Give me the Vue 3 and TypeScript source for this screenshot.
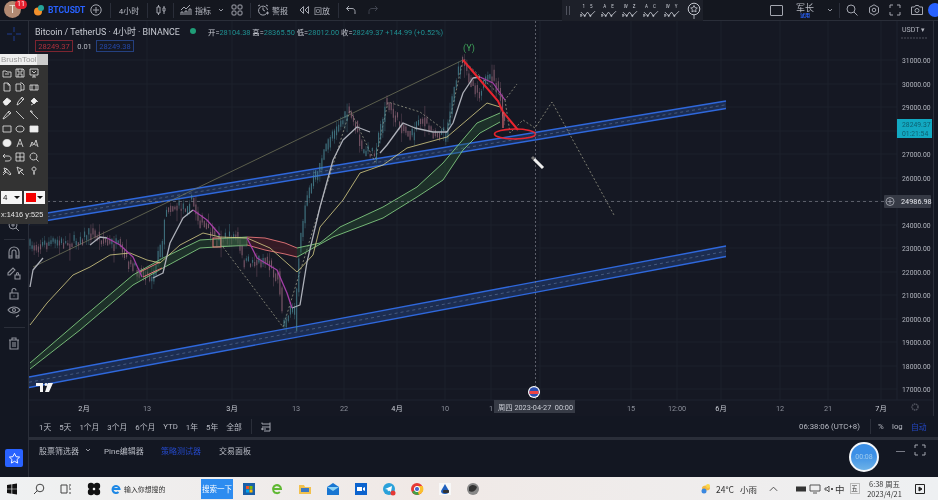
<script setup lang="ts">
type P = [number, number]
const s = (a: P[]) => a.map((p) => p.join(',')).join(' ')

const env: P[] = [[30,247],[53,243],[73,243],[92,233],[107,242],[120,247],[132,267],[153,277],[163,243],[167,207],[187,207],[193,200],[200,220],[217,240],[237,237],[245,263],[267,260],[280,280],[284,322],[297,307],[300,247],[307,200],[320,167],[333,133],[350,113],[357,127],[363,153],[377,150],[387,103],[400,123],[413,137],[420,117],[433,132],[447,133],[452,107],[455,85],[463,62],[473,83],[480,92],[493,75],[502,100],[505,125]]
const yAt = (x: number) => {
  for (let i = 1; i < env.length; i++) {
    if (x <= env[i][0]) {
      const [a, b] = [env[i - 1], env[i]]
      return a[1] + ((b[1] - a[1]) * (x - a[0])) / (b[0] - a[0])
    }
  }
  return env[env.length - 1][1]
}
let seed = 7
const rnd = () => {
  seed = (seed * 16807) % 2147483647
  return seed / 2147483647
}
const candles: { x: number; y1: number; y2: number; t: number; b: number; c: string }[] = []
for (let x = 30; x < 505; x += 2.1) {
  const y0 = yAt(x)
  const d = yAt(x + 2.1) - y0
  const j = (rnd() - 0.5) * 9
  const up = d + j * 0.35 < 0
  const h = 1.5 + rnd() * 5 + Math.abs(d)
  const top = y0 + j - h / 2
  const spike = rnd() > 0.8 ? 12 : 5
  candles.push({ x, y1: top - rnd() * spike, y2: top + h + rnd() * spike, t: top, b: top + h, c: up ? '#4b8a98' : '#96697c' })
}

const band = (x0: number, y0: number, x1: number, y1: number, th: number) => ({
  top: s([[x0, y0], [x1, y1]]),
  bot: s([[x0, y0 + th], [x1, y1 + th]]),
  mid: s([[x0, y0 + th / 2], [x1, y1 + th / 2]]),
  fill: s([[x0, y0], [x1, y1], [x1, y1 + th], [x0, y0 + th]]),
})
const channels = [band(29, 216, 726, 101, 7.5), band(29, 377, 726, 246, 10.5)]

const gTop: P[] = [[30,363],[80,320],[133,275],[163,258],[200,240],[247,237]]
const gBot: P[] = [[30,369],[80,330],[133,285],[163,268],[200,248],[247,245]]
const rTop: P[] = [[247,237],[265,238],[285,243],[297,248]]
const rBot: P[] = [[247,245],[265,250],[285,254],[297,257]]
const hTop: P[] = [[297,248],[320,243],[340,227],[383,207],[417,187],[443,163],[460,143],[477,123],[500,113]]
const hBot: P[] = [[297,257],[333,237],[383,218],[417,197],[443,180],[463,150],[480,133],[500,122]]
const poly = (a: P[], b: P[]) => s([...a, ...[...b].reverse()])

const ribbons = [
  { f: poly(gTop, gBot), t: s(gTop), b: s(gBot), fc: '#2a5a35', lc: '#7fc77f' },
  { f: poly(hTop, hBot), t: s(hTop), b: s(hBot), fc: '#2a5a35', lc: '#7fc77f' },
  { f: poly(rTop, rBot), t: s(rTop), b: s(rBot), fc: '#6a2029', lc: '#e8777a' },
]
const redBit = s([[140, 272], [160, 262]])
const redBit2 = s([[143, 277], [162, 268]])

const yellow = s([[30,325],[47,303],[73,275],[90,267],[110,255],[130,253],[147,260],[160,263],[180,245],[203,233],[220,237],[247,238],[270,248],[297,272],[313,255],[320,227],[343,200],[360,173],[383,165],[407,148],[447,137],[467,120],[487,103],[500,107]])
const white = [
  s([[30,287],[33,270],[43,258]]),
  s([[90,245],[100,237],[107,238]]),
  s([[153,278],[163,273],[170,243],[183,218],[193,210]]),
  s([[292,308],[300,305],[307,262],[320,207],[333,160],[343,140],[357,127],[370,132]]),
  s([[380,153],[387,145],[403,123],[415,128],[433,132],[447,132],[453,123],[463,93],[473,78],[480,77]]),
]
const purple = [
  s([[107,238],[120,245],[133,257],[142,277]]),
  s([[193,210],[207,220],[220,235]]),
  s([[247,238],[257,258],[277,270],[287,293],[292,308]]),
  s([[480,77],[493,83],[505,100]]),
]
const zig = s([[223,247],[283,327],[350,110],[375,162],[388,102],[420,112],[447,132],[463,60],[505,100],[517,84]])
const zig2 = s([[505,100],[510,133],[523,120],[535,128],[552,102],[614,215]])

const priceLabels: [string, number][] = [['31000.00',60],['30000.00',84],['29000.00',107],['27000.00',154],['26000.00',178],['24000.00',225],['23000.00',248],['22000.00',272],['21000.00',295],['20000.00',319],['19000.00',342],['18000.00',366],['17000.00',389]]
const timeLabels: [string, number, boolean][] = [['2月',84,true],['13',147,false],['3月',232,true],['13',296,false],['22',344,false],['4月',397,true],['10',445,false],['15',631,false],['12:00',677,false],['6月',721,true],['12',780,false],['21',828,false],['7月',881,true]]
const hGrid = [60,84,107,131,154,178,201,225,248,272,295,319,342,366,389]
const vGrid = [84,147,232,296,344,397,445,491,540,631,677,721,780,828,881]

const ranges = ['1天','5天','1个月','3个月','6个月','YTD','1年','5年','全部']
const waves = [['1','5'],['A','E'],['W','Z'],['A','C'],['W','Y']]

const brushIcons: { d: string; f?: boolean }[] = [
  { d: 'M1 3h3l1 1h4v5H1zM3 6h4' },
  { d: 'M1 1h7l1 1v7H1zM3 1v3h4V1M3 9V6h4v3' },
  { d: 'M1 1h8v6H1zM3 9h4M5 7v2M3 3l2 2 2-2' },
  { d: 'M2 1h4l2 2v6H2zM6 1v2h2' },
  { d: 'M1 2h4l1 1v6H1zM5 1h2l2 2v5H6' },
  { d: 'M1 3h8v5H1z M3 3v5M7 3v5' },
  { d: 'M1 6l4-4 4 3-4 4H3zM3 4l4 3', f: true },
  { d: 'M2 9l1-3 4-5 2 2-5 5zM6 2l2 2' },
  { d: 'M2 5l3-3 3 3-3 3zM5 2l4 4M4 8l-2 1', f: true },
  { d: 'M1 9l1-2 5-6 2 2-6 5zM6 2l2 2' },
  { d: 'M1 1l8 8' },
  { d: 'M1 1l2 0 0 2zM3 3l6 6' },
  { d: 'M1 2h8v6H1z' },
  { d: 'M5 2c3 0 4 1.5 4 3s-1 3-4 3-4-1.5-4-3 1-3 4-3z' },
  { d: 'M1 2h8v6H1z', f: true },
  { d: 'M5 1.5c3 0 4 1.7 4 3.5s-1 3.5-4 3.5S1 6.800 1 5s1-3.500 4-3.500z', f: true },
  { d: 'M2 9l3-8 3 8M3.200 6h3.600' },
  { d: 'M1 9l2-5 2 3 2-5 2 7M2 7h2M6 7h2' },
  { d: 'M3 2L1 4l2 2M1 4h5c2 0 3 1 3 2.500S8 9 6 9H3' },
  { d: 'M1 1h8v8H1zM5 1v8M1 5h8' },
  { d: 'M4.500 1a3.500 3.500 0 1 0 .01 0M7 7l2.500 2.500' },
  { d: 'M1 7l4-4M2 2l3 1 4 5-1 1-5-4zM1 9l3-3' },
  { d: 'M2 1l6 3-3 1-1 3zM5 5l4 4' },
  { d: 'M5 1a2 2 0 1 0 .01 0M5 5v4M4 7h2' },
]
</script>

<template>
  <div class="page">
    <header class="top">
      <div class="avatar-cell">
        <span class="avatar">T</span>
        <span class="badge">11</span>
      </div>
      <div class="sym">
        <svg class="ic" viewBox="0 0 12 12"><circle cx="5" cy="7.500" r="4" fill="#f5912c" /><circle cx="8" cy="4" r="3" fill="#26a69a" /></svg>
        <span>BTCUSDT</span>
      </div>
      <div class="plus">
        <svg class="ic i12" viewBox="0 0 12 12" fill="none" stroke="#a3a6af"><circle cx="6" cy="6" r="5.200" /><path d="M6 3v6M3 6h6" /></svg>
      </div>
      <i class="sep s6"></i>
      <div class="interval">4小时</div>
      <i class="sep"></i>
      <div class="candle">
        <svg class="ic i12" viewBox="0 0 12 12" fill="none" stroke="#a3a6af"><path d="M2 3h3v6H2zM3.500 1v2M3.500 9v2M8 4h2v3H8zM9 2v2M9 7v3" /></svg>
      </div>
      <i class="sep"></i>
      <div class="tb ml6">
        <svg class="ic i12" viewBox="0 0 12 12" fill="none" stroke="#a3a6af"><path d="M1 6l3-3 2 2 4-4M1 11V8h2v3M5 11V7h2v4M9 11V5h2v6" /></svg>
        <span>指标</span>
      </div>
      <svg class="ic chev ml5" viewBox="0 0 10 10" fill="none" stroke="#9598a1"><path d="M3 4l2 2 2-2" /></svg>
      <svg class="ic i12 ml5" viewBox="0 0 12 12" fill="none" stroke="#a3a6af"><rect x="1" y="1" width="4" height="4" rx="1" /><rect x="7" y="1" width="4" height="4" rx="1" /><rect x="1" y="7" width="4" height="4" rx="1" /><rect x="7" y="7" width="4" height="4" rx="1" /></svg>
      <i class="sep s7"></i>
      <div class="tb ml6">
        <svg class="ic i12" viewBox="0 0 12 12" fill="none" stroke="#a3a6af"><path d="M9.500 9.500A4.500 4.500 0 1 1 10.500 6M6 3.500V6l2 1M1 2l2-1M9 1l2 1M9 9h3M10.500 7.500v3" /></svg>
        <span>警报</span>
      </div>
      <div class="tb ml10 g4">
        <svg class="ic i12" viewBox="0 0 12 12" fill="none" stroke="#a3a6af"><path d="M5.500 2.500L2 6l3.500 3.500zM10.500 2.500L7 6l3.500 3.500z" /></svg>
        <span>回放</span>
      </div>
      <i class="sep s8"></i>
      <svg class="ic i12 ml6" viewBox="0 0 12 12" fill="none" stroke="#a3a6af"><path d="M4 2L1.500 4.500 4 7M1.500 4.500H7c2 0 3 1.200 3 3V10" /></svg>
      <svg class="ic i12 ml10" viewBox="0 0 12 12" fill="none" stroke="#3f434e"><path d="M8 2l2.500 2.500L8 7M10.500 4.500H5c-2 0-3 1.200-3 3V10" /></svg>

      <div class="floatbar">
        <span class="dots"></span>
        <div v-for="(w, i) in waves" :key="i" class="wave">
          <div class="wave-t"><span>{{ w[0] }}</span><span>{{ w[1] }}</span></div>
          <svg viewBox="0 0 17 9" fill="none" stroke="#c4c7cf"><path d="M1 3l4 4 3-4 3 4 5-5" stroke-width=".9" /><circle cx="1" cy="6.500" r="1" /><circle cx="5" cy="7" r=".7" /><circle cx="11" cy="7" r=".7" /></svg>
        </div>
        <svg class="star-c" viewBox="0 0 14 18" fill="none" stroke="#c4c7cf"><circle cx="7" cy="7" r="5.800" /><path d="M7 3.500l1 2.200 2.300.3-1.700 1.600.5 2.300L7 8.800 4.900 9.900l.5-2.300L3.700 6 6 5.700zM7 13v4" stroke-width=".8" /></svg>
      </div>

      <div class="top-right">
        <span class="square"></span>
        <div class="user">
          <span class="user-n">军长</span>
          <span class="user-s">试用</span>
        </div>
        <svg class="ic chev" viewBox="0 0 10 10" fill="none" stroke="#9598a1"><path d="M3 4l2 2 2-2" /></svg>
        <i class="sep s4"></i>
        <svg class="ic i12 ml6" viewBox="0 0 12 12" fill="none" stroke="#a3a6af"><circle cx="5" cy="5" r="4" /><path d="M8 8l3.500 3.500" /></svg>
        <svg class="ic i12 ml10" viewBox="0 0 12 12" fill="none" stroke="#a3a6af"><path d="M6 .8l4.500 2.600v5.200L6 11.200 1.500 8.600V3.400z" /><circle cx="6" cy="6" r="1.800" /></svg>
        <svg class="ic i12 ml9" viewBox="0 0 12 12" fill="none" stroke="#a3a6af"><path d="M1 4V1h3M8 1h3v3M11 8v3H8M4 11H1V8" /></svg>
        <svg class="ic i12 ml10" viewBox="0 0 12 12" fill="none" stroke="#a3a6af"><path d="M.5 3h3l1-1.500h3l1 1.500h3v7.500H.5z" /><circle cx="6" cy="6.500" r="2" /></svg>
        <span class="blue-dot"></span>
      </div>
    </header>

    <div class="body">
      <aside class="left">
        <svg class="cross" viewBox="0 0 14 14" fill="none" stroke="#2962ff" opacity=".5"><path d="M7 0v5M7 9v5M0 7h5M9 7h5" /></svg>
        <svg class="ic i12 zoomi" viewBox="0 0 12 12" fill="none" stroke="#8f929b"><circle cx="5" cy="5" r="4" /><path d="M8 8l3 3M3 5h4M5 3v4" /></svg>
        <i class="lsep m7"></i>
        <svg class="lic m3" viewBox="0 0 14 14" fill="none" stroke="#8f929b" stroke-width="1.100"><path d="M2 12V6a5 5 0 0 1 10 0v6H9V6a2 2 0 0 0-4 0v6zM2 10h3M9 10h3" /></svg>
        <svg class="lic" viewBox="0 0 14 14" fill="none" stroke="#8f929b" stroke-width="1.100"><path d="M1 7l5-5 2 2-5 5H1zM8 9h5v4H8zM9.500 9V7.500a1 1 0 0 1 2 0V9" /></svg>
        <svg class="lic m1" viewBox="0 0 14 14" fill="none" stroke="#8f929b" stroke-width="1.100"><path d="M3 6h8v6H3zM5 6V3.500a2 2 0 0 1 4 0M7 8.500v1" /></svg>
        <svg class="lic lic-s" viewBox="0 0 14 14" fill="none" stroke="#8f929b" stroke-width="1.100"><path d="M1 5c3-4 9-4 12 0-3 4-9 4-12 0z" /><circle cx="7" cy="5" r="1.500" /><path d="M9 12l3-2" /></svg>
        <i class="lsep m7"></i>
        <svg class="lic m5" viewBox="0 0 14 14" fill="none" stroke="#8f929b" stroke-width="1.100"><path d="M3 4h8v9H3zM2 4h10M5 4V2h4v2M6 6v5M8 6v5" /></svg>
        <span class="star-btn">
          <svg viewBox="0 0 14 14" fill="none" stroke="#fff"><path d="M7 1.500l1.700 3.500 3.800.5-2.800 2.600.7 3.800L7 10l-3.400 1.900.7-3.800L1.500 5.500 5.300 5z" /></svg>
        </span>

        <div class="brush">
          <div class="brush-h"><span>BrushTool</span><i></i></div>
          <div class="brush-g">
            <svg v-for="(b, i) in brushIcons" :key="i" viewBox="0 0 10 10" :fill="b.f ? '#eee' : 'none'" stroke="#e8e8e8" stroke-width=".8"><path :d="b.d" /></svg>
          </div>
          <div class="brush-s">
            <div class="sel"><span class="sel-v">4</span><i class="car"></i></div>
            <div class="sel"><span class="swatch"></span><i class="car"></i></div>
          </div>
          <div class="coord">x:1416 y:525</div>
        </div>
      </aside>

      <main class="main">
        <svg class="chart" viewBox="29 21 909 395">
          <line v-for="y in hGrid" :key="'h' + y" x1="29" x2="897" :y1="y" :y2="y" stroke="#1c202d" />
          <line v-for="x in vGrid" :key="'v' + x" y1="21" y2="400" :x1="x" :x2="x" stroke="#1c202d" />

          <line x1="897" x2="897" y1="21" y2="400" stroke="#1f2330" />
          <line x1="29" x2="933" y1="400" y2="400" stroke="#1f2330" />
          <rect x="933" y="21" width="5" height="395" fill="#131722" />
          <line x1="933.500" x2="933.500" y1="21" y2="416" stroke="#2a2e39" />

          <g v-for="(c, i) in channels" :key="'c' + i">
            <polygon :points="c.fill" fill="#23417f" opacity=".5" />
            <polyline :points="c.top" stroke="#2f68dc" stroke-width="1.400" fill="none" />
            <polyline :points="c.bot" stroke="#2f68dc" stroke-width="1.400" fill="none" />
            <polyline :points="c.mid" stroke="#6f84a8" stroke-width=".5" stroke-dasharray="3 3" fill="none" />
          </g>

          <polyline points="33,267 463,60" stroke="#7a7d5e" stroke-width=".7" fill="none" />
          <polyline :points="zig" stroke="#a8a892" stroke-width=".7" stroke-dasharray="2 2" fill="none" />
          <polyline :points="zig2" stroke="#a8a892" stroke-width=".7" stroke-dasharray="2 2" fill="none" />

          <g v-for="(c, i) in candles" :key="'k' + i">
            <line :x1="c.x" :x2="c.x" :y1="c.y1" :y2="c.y2" :stroke="c.c" stroke-width=".5" opacity=".7" />
            <line :x1="c.x" :x2="c.x" :y1="c.t" :y2="c.b" :stroke="c.c" stroke-width="1.100" opacity=".65" />
          </g>

          <g v-for="(r, i) in ribbons" :key="'r' + i">
            <polygon :points="r.f" :fill="r.fc" opacity=".38" />
            <polyline :points="r.t" :stroke="r.lc" stroke-width=".9" fill="none" />
            <polyline :points="r.b" :stroke="r.lc" stroke-width=".9" fill="none" />
          </g>
          <polyline :points="redBit" stroke="#e8777a" fill="none" />
          <polyline :points="redBit2" stroke="#e8777a" fill="none" />
          <rect x="213" y="238" width="8" height="9" fill="none" stroke="#e8777a" />
          <rect x="221" y="238" width="26" height="8" fill="#3a5f44" opacity=".55" stroke="#9fd49f" stroke-width=".6" />

          <polyline :points="yellow" stroke="#d8cf86" stroke-width=".8" fill="none" stroke-linejoin="round" />
          <polyline v-for="(w, i) in white" :key="'w' + i" :points="w" stroke="#aeb1ba" stroke-width="1.300" fill="none" stroke-linejoin="round" />
          <polyline v-for="(p, i) in purple" :key="'p' + i" :points="p" stroke="#a43fa6" stroke-width="1.300" fill="none" stroke-linejoin="round" />

          <text x="463" y="51" class="wave-y">(Y)</text>

          <polyline points="463,60 498,101 503,112 518,130" stroke="#e8242f" stroke-width="2" fill="none" />
          <line x1="503" y1="112" x2="503" y2="128" stroke="#d0626a" stroke-width="1.300" />
          <ellipse cx="515" cy="134" rx="20.500" ry="5" fill="none" stroke="#e8242f" stroke-width="1.700" />

          <line x1="535.500" x2="535.500" y1="21" y2="400" stroke="#787b86" stroke-width=".7" stroke-dasharray="2 2" />
          <line x1="29" x2="884" y1="201.500" y2="201.500" stroke="#787b86" stroke-width=".7" stroke-dasharray="3 3" />

          <line x1="534" y1="159" x2="543" y2="168" stroke="#eee" stroke-width="3" />
          <line x1="532" y1="157" x2="534" y2="159" stroke="#777" stroke-width="3" />

          <path d="M36 383h7v9h-3v-6h-4zM45 392l3-9h5l-4 9z M46 383a1.500 1.500 0 1 0 .01 0" fill="#f5f5f5" />

          <circle cx="534" cy="392" r="6" fill="#fff" />
          <circle cx="534" cy="392" r="4.800" fill="#2b4fb0" />
          <rect x="529.500" y="391" width="9" height="3" fill="#e44" />

          <text x="902" y="32" class="usdt">USDT ▾</text>
          <line x1="901" x2="928" y1="38" y2="38" stroke="#50535e" stroke-dasharray="2 1" />
          <text v-for="p in priceLabels" :key="p[0]" x="902" :y="p[1] + 2.5" class="price">{{ p[0] }}</text>
          <rect x="897" y="119" width="35" height="19" fill="#12a9c2" />
          <text x="902" y="127" class="tag">28249.37</text>
          <text x="902" y="135.500" class="tag">01:21:54</text>
          <rect x="884" y="195" width="47" height="13" rx="1" fill="#363a45" />
          <circle cx="890" cy="201.500" r="4" fill="none" stroke="#b2b5be" stroke-width=".8" />
          <path d="M890 199v5M887.500 201.500h5" stroke="#b2b5be" stroke-width=".7" />
          <text x="901" y="204" class="price hi">24986.98</text>

          <text v-for="t in timeLabels" :key="t[0] + t[1]" :x="t[1]" y="411" text-anchor="middle" :class="t[2] ? 'tick tick-b' : 'tick'">{{ t[0] }}</text>
          <text x="491" y="411" text-anchor="middle" class="tick">1</text>
          <rect x="494" y="400" width="81" height="13" fill="#363a45" />
          <text x="498" y="410" class="tick tick-b">周四 2023-04-27 &#160;00:00</text>
          <circle cx="915" cy="407" r="3" fill="none" stroke="#50535e" stroke-width="1.500" stroke-dasharray="1.500 .6" />
        </svg>

        <div class="legend">
          <div class="legend-1">
            <span class="title">Bitcoin / TetherUS · 4小时 · BINANCE</span>
            <i class="live"></i>
            <span class="ohlc">
              <b>开=</b><em>28104.38</em> <b>高=</b><em>28365.50</em> <b>低=</b><em>28012.00</em> <b>收=</b><em>28249.37</em> <em>+144.99 (+0.52%)</em>
            </span>
          </div>
          <div class="legend-2">
            <span class="box red">28249.37</span>
            <span class="spread">0.01</span>
            <span class="box blue">28249.38</span>
          </div>
        </div>

        <div class="range">
          <span v-for="r in ranges" :key="r" class="range-i">{{ r }}</span>
          <i class="sep rsep"></i>
          <svg class="ic i12" viewBox="0 0 12 12" fill="none" stroke="#a3a6af"><path d="M2 3h8v7H4M2 3V1.500M10 3V1.500M2 6h8M6 8H1.500M3 7L1.500 8 3 9" /></svg>
          <div class="range-r">
            <span class="clock">06:38:06 (UTC+8)</span>
            <i class="sep"></i>
            <span class="pct">%</span>
            <span class="log">log</span>
            <span class="auto">自动</span>
          </div>
        </div>

        <div class="panel">
          <div class="tabs">
            <span class="t1">股票筛选器</span>
            <svg class="ic chev" viewBox="0 0 10 10" fill="none" stroke="#9598a1"><path d="M3 4l2 2 2-2" /></svg>
            <span class="t2">Pine编辑器</span>
            <span class="t3">策略测试器</span>
            <span class="t4">交易面板</span>
          </div>
          <div class="panel-r">
            <div class="timer">00:08</div>
            <i class="minus"></i>
            <svg class="ic i12" viewBox="0 0 12 12" fill="none" stroke="#a3a6af"><path d="M1 4V1h3M8 1h3v3M11 8v3H8M4 11H1V8" /></svg>
          </div>
        </div>
      </main>
    </div>

    <footer class="task">
      <svg class="tk" viewBox="0 0 12 12" fill="#111"><path d="M1 2l4.500-.7V5.700H1zM6.200 1.200L11 .5v5.200H6.200zM1 6.300h4.500v4.400L1 10zM6.200 6.300H11v5.200l-4.800-.7z" /></svg>
      <svg class="tk" viewBox="0 0 12 12" fill="none" stroke="#444"><circle cx="7" cy="5" r="3.800" /><path d="M4.300 7.700L1 11" /></svg>
      <svg class="tk" viewBox="0 0 12 12" fill="none" stroke="#444"><path d="M1 2h6v8H1zM9 2h2M9 6h2M9 10h2M9 4h1" /></svg>
      <svg class="tk tk-l" viewBox="0 0 14 14" fill="#111"><circle cx="4" cy="4" r="3.200" /><circle cx="10" cy="4" r="3.200" /><circle cx="4" cy="10" r="3.200" /><circle cx="10" cy="10" r="3.200" /><circle cx="7" cy="7" r="1.200" fill="#eee" /></svg>
      <div class="ie">
        <svg class="tk" viewBox="0 0 12 12" fill="none" stroke="#1e88e5" stroke-width="2"><path d="M2.500 6h7a3.500 3.500 0 1 0-1 3" /></svg>
        <span>输入你想搜的</span>
      </div>
      <span class="go">搜索一下</span>
      <svg class="tk app" viewBox="0 0 14 14"><rect x="1" y="1" width="12" height="12" fill="#1a5fa8" /><rect x="4" y="4" width="3" height="3" fill="#f25022" /><rect x="7.500" y="4" width="3" height="3" fill="#7fba00" /><rect x="4" y="7.500" width="3" height="3" fill="#00a4ef" /><rect x="7.500" y="7.500" width="3" height="3" fill="#ffb900" /></svg>
      <svg class="tk app" viewBox="0 0 14 14" fill="none" stroke="#5fb832" stroke-width="2"><path d="M3 7h8a4 4 0 1 0-1.200 3" /></svg>
      <svg class="tk app" viewBox="0 0 14 14"><path d="M1 3h5l1 2h6v7H1z" fill="#f2c14e" /><rect x="3" y="6" width="8" height="4" fill="#3b78c4" /></svg>
      <svg class="tk app" viewBox="0 0 14 14"><path d="M1 5l6-4 6 4v8H1z" fill="#1976d2" /><path d="M1 5l6 4 6-4" fill="#8fd3f4" /></svg>
      <svg class="tk app" viewBox="0 0 14 14"><rect x="1" y="1" width="12" height="12" fill="#0c63ce" /><rect x="3" y="5" width="5" height="4" fill="#fff" /><path d="M9 6l2-1v4l-2-1z" fill="#fff" /></svg>
      <svg class="tk app" viewBox="0 0 14 14"><circle cx="7" cy="7" r="6" fill="#2aa1da" /><path d="M3 7l7-3-1 6-2-1.500-1 1-.5-2z" fill="#fff" /><circle cx="11" cy="11" r="2.500" fill="#e53935" /></svg>
      <svg class="tk app" viewBox="0 0 14 14"><circle cx="7" cy="7" r="6" fill="#e53935" /><path d="M7 7L2 10a6 6 0 0 0 7 2.700z" fill="#43a047" /><path d="M7 4h5.600a6 6 0 0 1-3.600 8.700L7 7z" fill="#fbc02d" /><circle cx="7" cy="7" r="2.600" fill="#4a67c9" stroke="#fff" /></svg>
      <svg class="tk app" viewBox="0 0 14 14"><rect x="1" y="1" width="12" height="12" fill="#f7f7f7" /><path d="M7 2L3 9a4 3 0 0 0 8 0z" fill="#1f5fbd" /><rect x="5" y="8" width="6" height="3" rx="1" fill="#333" /></svg>
      <svg class="tk app" viewBox="0 0 14 14"><circle cx="7" cy="7" r="6" fill="#888" /><path d="M3 5c3-3 6-2 8 0-1 4-5 6-8 4z" fill="#333" /></svg>
      <div class="tray">
        <svg class="tk" viewBox="0 0 14 14"><ellipse cx="7" cy="6" rx="4" ry="2.500" fill="#f4b942" /><circle cx="5" cy="9" r="2.500" fill="#3b88e0" /><circle cx="9" cy="4" r="2" fill="#fbd74a" /></svg>
        <span class="temp">24°C 小雨</span>
        <svg class="tk up" viewBox="0 0 12 12" fill="none" stroke="#444"><path d="M2 8l4-4 4 4" /></svg>
        <svg class="tk" viewBox="0 0 12 12"><rect x="1" y="3.500" width="10" height="5" fill="#333" /></svg>
        <svg class="tk tm" viewBox="0 0 12 12" fill="none" stroke="#555"><path d="M1 2h10v6H1zM4 10h4" /></svg>
        <svg class="tk tm" viewBox="0 0 12 12" fill="none" stroke="#555"><path d="M2 5h2l2-2v6L4 7H2zM8 5l2 2M10 5L8 7" /></svg>
        <span class="zh">中</span>
        <span class="wu">五</span>
        <div class="clock2"><span>6:38 周五</span><span>2023/4/21</span></div>
        <svg class="tk note" viewBox="0 0 12 12" fill="none" stroke="#222"><path d="M1.500 1.500h9v9h-9z" /><path d="M5 4l3 2-3 2z" fill="#222" /></svg>
      </div>
    </footer>
  </div>
</template>

<style>
html, body { margin: 0; background: #131722; }
</style>

<style scoped>
.page { width: 938px; height: 500px; overflow: hidden; display: flex; flex-direction: column; background: #131722; color: #b8bbc4; font-family: "Roboto", "Noto Sans CJK SC", sans-serif; font-size: 8px; filter: blur(.5px); }
.top { height: 20px; flex: none; display: flex; align-items: center; position: relative; border-bottom: 1px solid #2a2e39; background: #14171f; }
.ic { display: block; flex: none; }
.i12 { width: 12px; height: 12px; }
.chev { width: 10px; height: 10px; }
.sep { display: block; width: 1px; height: 15px; background: #2a2e39; flex: none; }
.s4 { margin-left: 4px; }
.s6 { margin-left: 6px; }
.s7 { margin-left: 7px; }
.s8 { margin-left: 8px; }
.ml5 { margin-left: 5px; }
.ml6 { margin-left: 6px; }
.ml9 { margin-left: 9px; }
.ml10 { margin-left: 10px; }
.avatar-cell { width: 33px; flex: none; position: relative; height: 20px; }
.avatar { position: absolute; left: 4px; top: 1px; width: 17px; height: 17px; border-radius: 50%; background: #b28a72; color: #f2e6da; font-size: 11px; line-height: 17px; text-align: center; }
.badge { position: absolute; left: 15px; top: 0; width: 12px; height: 9px; border-radius: 5px; background: #e5202e; color: #fff; font-size: 7px; line-height: 9px; text-align: center; }
.sym { width: 55px; flex: none; display: flex; align-items: center; gap: 3px; color: #2962ff; font-weight: 700; font-size: 8.5px; }
.sym .ic { width: 12px; height: 12px; }
.plus { width: 16px; flex: none; display: flex; justify-content: center; }
.interval { width: 36px; text-align: center; flex: none; }
.candle { width: 25px; flex: none; display: flex; justify-content: center; }
.tb { display: flex; align-items: center; gap: 3px; flex: none; font-size: 8px; }
.g4 { gap: 4px; }
.floatbar { position: absolute; left: 562px; top: 0; width: 141px; height: 21px; background: #1d2029; display: flex; align-items: center; box-sizing: border-box; padding-left: 4px; z-index: 3; }
.dots { width: 5px; height: 9px; margin-right: 6px; flex: none; background: repeating-linear-gradient(90deg, #50535e 0 1px, transparent 1px 3px); }
.wave { width: 21px; flex: none; display: flex; flex-direction: column; align-items: center; }
.wave svg { width: 16px; height: 9px; display: block; }
.wave-t { display: flex; gap: 5px; font-size: 4.5px; line-height: 5px; color: #c9ccd4; }
.star-c { width: 14px; height: 18px; margin-left: 5px; flex: none; }
.top-right { margin-left: auto; margin-right: -4px; display: flex; align-items: center; flex: none; }
.square { width: 11px; height: 9px; border: 1px solid #a3a6af; border-radius: 1px; display: block; }
.user { width: 20px; margin-left: 12px; margin-right: 10px; display: flex; flex-direction: column; align-items: center; }
.user-n { font-size: 9px; line-height: 10px; }
.user-s { font-size: 5px; line-height: 5px; color: #2962ff; font-weight: 700; }
.blue-dot { width: 14px; height: 14px; border-radius: 50%; background: #2962ff; margin-left: 5px; display: block; }

.body { flex: 1; min-height: 0; display: flex; position: relative; }
.left { width: 28px; flex: none; border-right: 1px solid #2a2e39; display: flex; flex-direction: column; align-items: center; position: relative; z-index: 5; background: #131722; }
.cross { width: 14px; height: 14px; margin-top: 6px; display: block; flex: none; }
.zoomi { margin-top: 179px; }
.lsep { display: block; width: 21px; height: 1px; background: #2a2e39; flex: none; }
.m1 { margin-top: 1px; }
.m3 { margin-top: 3px; }
.m5 { margin-top: 5px; }
.m7 { margin-top: 7px; }
.lic { width: 20px; height: 20px; padding: 3px; box-sizing: border-box; display: block; flex: none; }
.lic-s { height: 16px; padding: 1px 3px; }
.star-btn { margin-top: auto; margin-bottom: 10px; width: 18px; height: 18px; border-radius: 2px; background: #2962ff; display: flex; align-items: center; justify-content: center; flex: none; }
.star-btn svg { width: 13px; height: 13px; }

.brush { position: absolute; left: 0; top: 33px; width: 48px; height: 170px; background: #333; overflow: hidden; font-family: "Liberation Sans", sans-serif; }
.brush-h { height: 11px; background: #eee; color: #9a9a9a; font-size: 8px; line-height: 11px; padding-left: 1px; display: flex; justify-content: space-between; }
.brush-h i { width: 11px; background: #ccc; display: block; }
.brush-g { display: grid; grid-template-columns: repeat(3, 13.5px); grid-auto-rows: 14px; justify-items: center; align-items: center; margin-top: 1px; }
.brush-g svg { width: 10px; height: 10px; display: block; }
.brush-s { display: flex; gap: 2px; margin-top: 13px; padding-left: 1px; }
.sel { width: 21px; height: 13px; background: #f4f4f4; display: flex; align-items: center; justify-content: space-between; padding: 0 2px; box-sizing: border-box; color: #111; font-size: 8px; }
.swatch { width: 10px; height: 9px; background: #f40000; display: block; }
.car { width: 0; height: 0; border-left: 3px solid transparent; border-right: 3px solid transparent; border-top: 3px solid #111; display: block; }
.coord { margin-top: 5px; padding-left: 1px; color: #e5e5e5; font-size: 7.400px; line-height: 12px; white-space: nowrap; }

.main { flex: 1; min-width: 0; display: flex; flex-direction: column; position: relative; background: #131722; }
.chart { width: 909px; height: 395px; display: block; flex: none; background: #151823; }
.legend { position: absolute; left: 6px; top: 4px; }
.legend-1 { display: flex; align-items: center; height: 12px; white-space: nowrap; }
.title { font-size: 8.900px; color: #c9ccd4; width: 150px; flex: none; }
.live { width: 6px; height: 6px; border-radius: 50%; background: #1f9d77; display: block; margin-left: 5px; flex: none; }
.ohlc { margin-left: 12px; font-size: 7.400px; }
.ohlc b { font-weight: 400; color: #c9ccd4; }
.ohlc em { font-style: normal; color: #1f8f91; }
.legend-2 { display: flex; align-items: center; margin-top: 3px; font-size: 7.500px; }
.box { width: 38px; height: 12px; line-height: 11px; box-sizing: border-box; text-align: center; border: 1px solid; }
.red { color: #b0303c; border-color: #7c2530; }
.blue { color: #2448a8; border-color: #24407f; }
.spread { width: 23px; text-align: center; }

.range { height: 21px; flex: none; display: flex; align-items: center; padding-left: 10px; position: relative; font-size: 7.800px; color: #b8bbc4; }
.range-i { margin-right: 8px; white-space: nowrap; }
.rsep { margin: 0 8px 0 1px; }
.range-r { position: absolute; left: 770px; top: 0; height: 21px; display: flex; align-items: center; white-space: nowrap; }
.clock { width: 71px; flex: none; }
.pct { margin-left: 7px; width: 12px; }
.log { margin-left: 2px; width: 18px; }
.auto { color: #2448c8; margin-left: 1px; }

.panel { flex: 1; border-top: 3px solid #2a2e39; display: flex; align-items: flex-start; position: relative; }
.tabs { display: flex; align-items: center; height: 20px; padding-left: 10px; font-size: 8px; white-space: nowrap; }
.t1 { width: 40px; }
.chev + .t2 { margin-left: 11px; }
.tabs .chev { margin-left: 4px; }
.t2 { width: 40px; }
.t3 { width: 40px; margin-left: 17px; color: #2448c8; }
.t4 { margin-left: 18px; }
.panel-r { position: absolute; left: 820px; top: 0; display: flex; align-items: center; height: 20px; }
.timer { width: 26px; height: 26px; margin-top: 14px; border-radius: 50%; background: linear-gradient(180deg, #3b8fe6 0 40%, #6db2e8 100%); border: 2px solid #f4f7fa; color: #9cc9ee; font-size: 7px; line-height: 26px; text-align: center; }
.minus { display: block; width: 9px; height: 1px; background: #787b86; margin: 3px 9px 0 17px; }

.task { height: 23px; flex: none; background: linear-gradient(90deg, #eff1f2, #f0e9e6 45%, #eef0f2); display: flex; align-items: center; color: #333; position: relative; font-family: "Noto Sans CJK SC", sans-serif; }
.tk { width: 12px; height: 12px; display: block; flex: none; margin-left: 15px; }
.tk:first-child { margin-left: 6px; }
.tk-l { width: 14px; height: 14px; }
.ie { display: flex; align-items: center; gap: 2px; margin-left: 9px; width: 99px; font-size: 6.900px; flex: none; }
.ie .tk { margin-left: 0; }
.go { width: 32px; height: 20px; line-height: 20px; background: #2d8cf0; color: #fff; text-align: center; font-size: 7.500px; flex: none; margin-left: -8px; white-space: nowrap; overflow: hidden; }
.app { width: 14px; height: 14px; margin-left: 14px; }
.go + .app { margin-left: 9px; }
.tray { position: absolute; left: 699px; top: 0; height: 23px; display: flex; align-items: center; font-size: 8.500px; }
.tray .tk { margin-left: 0; }
.tray .tk:first-child { width: 14px; height: 14px; }
.temp { margin-left: 3px; width: 44px; white-space: nowrap; word-spacing: 4px; }
.tray .up { margin-left: 8px; width: 11px; }
.tray .up + .tk { margin-left: 16px; }
.tray .tm { margin-left: 2px; }
.zh { margin-left: 0; font-size: 9.500px; }
.wu { margin-left: 5px; width: 8px; height: 9px; line-height: 9px; border: 1px solid #bbb; text-align: center; font-size: 6.500px; }
.clock2 { margin-left: 5px; width: 40px; display: flex; flex-direction: column; align-items: center; font-size: 7.400px; line-height: 10px; white-space: nowrap; }
.clock2 span { display: block; height: 10px; }
.tray .note { margin-left: 9px; }
</style>

<style scoped>
.wave-y { font: 9px "Roboto", sans-serif; fill: #3fa35a; }
.usdt { font: 7px "Roboto", sans-serif; fill: #b2b5be; }
.price { font: 6.800px "Roboto", sans-serif; fill: #b2b5be; }
.price.hi { fill: #e6e8ee; font-size: 7.300px; }
.tag { font: 6.800px "Roboto", sans-serif; fill: #0d5f70; }
.tick { font: 7.300px "Roboto", "Noto Sans CJK SC", sans-serif; fill: #8a8e99; }
.tick-b { fill: #c9ccd4; }
</style>
